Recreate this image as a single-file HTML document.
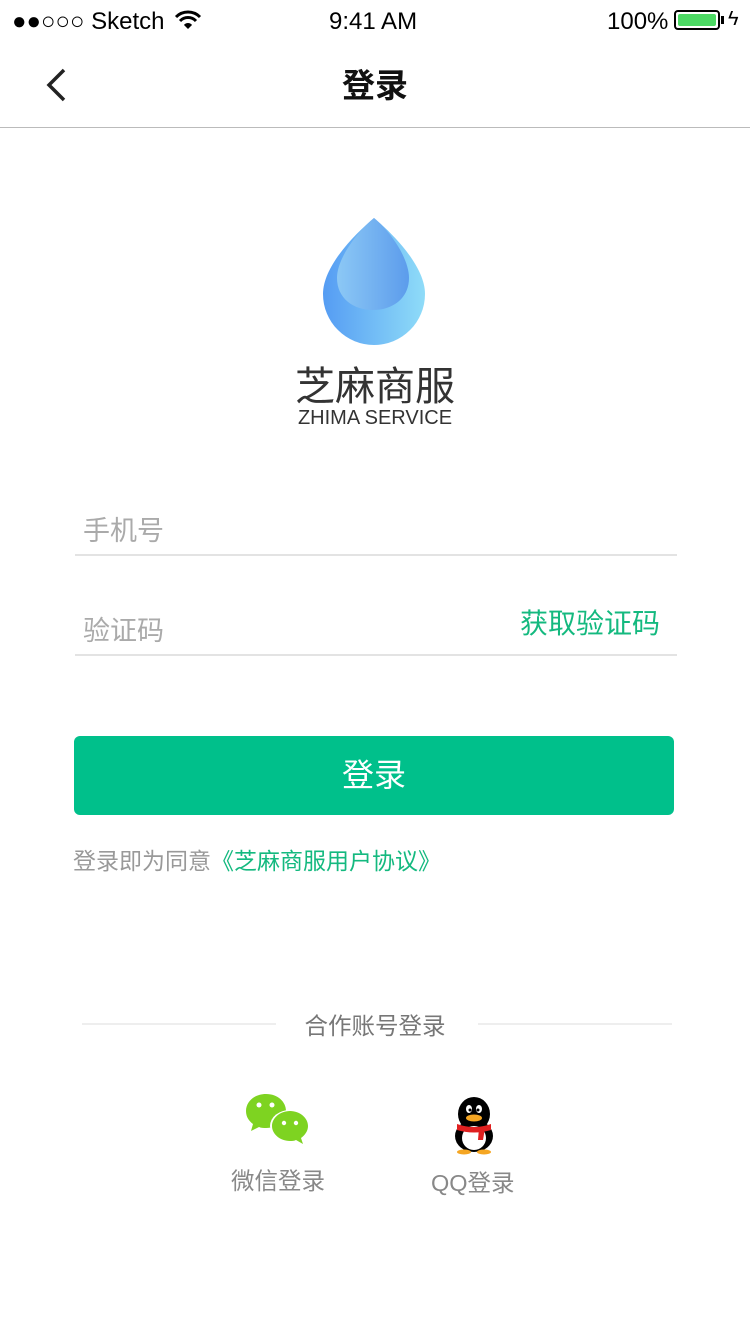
<!DOCTYPE html>
<html><head><meta charset="utf-8">
<style>
*{margin:0;padding:0;box-sizing:border-box}
body{width:750px;height:1334px;background:#fff;font-family:"Liberation Sans","Noto Sans CJK SC",sans-serif;position:relative;overflow:hidden}
.a{position:absolute;white-space:nowrap}
</style></head><body>
<div class="a" style="left:12px;top:8px;font-size:24px;color:#000">●●○○○ Sketch</div>
<svg class="a" style="left:174px;top:10px" width="28" height="20" viewBox="0 0 28 20"><path d="M2 7a17 17 0 0 1 24 0" stroke="#000" stroke-width="3" fill="none"/><path d="M6 11a11 11 0 0 1 16 0" stroke="#000" stroke-width="3" fill="none"/><path d="M10 15a5 5 0 0 1 8 0L14 19z" fill="#000"/></svg>
<div class="a" style="left:329px;top:8px;font-size:24px">9:41 AM</div>
<div class="a" style="left:607px;top:8px;font-size:24px">100%</div>
<div class="a" style="left:674px;top:10px;width:46px;height:20px;border:2px solid #000;border-radius:4px;padding:2px"><div style="width:100%;height:100%;background:#4cd964;border-radius:2px"></div></div>
<div class="a" style="left:721px;top:16px;width:3px;height:8px;background:#000"></div>
<div class="a" style="left:728px;top:8px;font-size:20px">ϟ</div>
<svg class="a" style="left:44px;top:68px" width="24" height="34"><path d="M20 2L5 17l15 15" stroke="#222" stroke-width="3.5" fill="none"/></svg>
<div class="a" style="left:0;width:750px;text-align:center;top:66px;font-size:33px;line-height:40px;font-weight:bold;color:#111">登录</div>
<div class="a" style="left:0;top:127px;width:750px;height:1px;background:#bbb"></div>
<svg class="a" style="left:320px;top:216px" width="108" height="130" viewBox="0 0 108 130">
<defs><linearGradient id="g" x1="0" x2="1"><stop offset="0" stop-color="#559cf3"/><stop offset="1" stop-color="#8fdcf8"/></linearGradient>
<linearGradient id="h" x1="0" x2="1"><stop offset="0" stop-color="#8cc8f5"/><stop offset="1" stop-color="#5c9cec"/></linearGradient></defs>
<path d="M54 2C35 18 3 50 3 78a51 51 0 0 0 102 0C105 50 73 18 54 2z" fill="url(#g)"/>
<path d="M54 2C38 15 17 42 17 62c0 20 16 32 36 32s36-12 36-32C89 42 70 15 54 2z" fill="url(#h)"/>
</svg>
<div class="a" style="left:0;width:750px;text-align:center;top:364px;font-size:40px;line-height:46px;color:#333">芝麻商服</div>
<div class="a" style="left:0;width:750px;text-align:center;top:406px;font-size:20px;line-height:24px;color:#333">ZHIMA SERVICE</div>
<div class="a" style="left:83px;top:511px;font-size:27px;line-height:40px;color:#aaa">手机号</div>
<div class="a" style="left:75px;top:554px;width:602px;height:2px;background:#e3e3e3"></div>
<div class="a" style="left:83px;top:611px;font-size:27px;line-height:40px;color:#aaa">验证码</div>
<div class="a" style="left:520px;top:604px;font-size:28px;line-height:40px;color:#14b97f">获取验证码</div>
<div class="a" style="left:75px;top:654px;width:602px;height:2px;background:#e3e3e3"></div>
<div class="a" style="left:74px;top:736px;width:600px;height:79px;background:#00c08b;border-radius:6px;color:#fff;font-size:32px;text-align:center;line-height:79px">登录</div>
<div class="a" style="left:73px;top:844px;font-size:23px;line-height:34px;color:#999">登录即为同意<span style="color:#14b97f">《芝麻商服用户协议》</span></div>
<div class="a" style="left:82px;top:1023px;width:194px;height:2px;background:#eee"></div>
<div class="a" style="left:478px;top:1023px;width:194px;height:2px;background:#eee"></div>
<div class="a" style="left:0;width:750px;text-align:center;top:1009px;font-size:23.5px;line-height:34px;color:#777">合作账号登录</div>
<svg class="a" style="left:244px;top:1092px" width="68" height="54" viewBox="0 0 68 54">
<path d="M22 2C10 2 2 10 2 19c0 6 3 10 7 13l-2 7 8-4c2 1 5 1 7 1 12 0 20-8 20-17S34 2 22 2z" fill="#7ed321"/>
<ellipse cx="46" cy="34" rx="20" ry="16" fill="#fff"/>
<path d="M46 19c-10 0-18 7-18 15s8 15 18 15c2 0 4 0 6-1l7 4-2-6c4-3 7-7 7-12 0-8-8-15-18-15z" fill="#7ed321"/>
<circle cx="15" cy="13" r="2.5" fill="#fff"/><circle cx="28" cy="13" r="2.5" fill="#fff"/>
<circle cx="40" cy="31" r="2.2" fill="#fff"/><circle cx="52" cy="31" r="2.2" fill="#fff"/></svg>
<svg class="a" style="left:449px;top:1096px" width="50" height="60" viewBox="0 0 50 60">
<ellipse cx="25" cy="40" rx="19" ry="16" fill="#000"/><ellipse cx="25" cy="18" rx="16" ry="17" fill="#000"/>
<ellipse cx="25" cy="42" rx="12" ry="12" fill="#fff"/>
<ellipse cx="20" cy="13" rx="3" ry="4" fill="#fff"/><ellipse cx="30" cy="13" rx="3" ry="4" fill="#fff"/>
<circle cx="21" cy="14" r="1.5" fill="#000"/><circle cx="29" cy="14" r="1.5" fill="#000"/>
<ellipse cx="25" cy="22" rx="8" ry="3.5" fill="#f5a623"/>
<path d="M8 28q17 6 34 0v6q-17 5-34 0z" fill="#e02020"/><path d="M30 32h6l-2 12h-5z" fill="#e02020"/>
<ellipse cx="15" cy="56" rx="7" ry="2.5" fill="#f5a623"/><ellipse cx="35" cy="56" rx="7" ry="2.5" fill="#f5a623"/></svg>
<div class="a" style="left:231px;top:1164px;font-size:23.5px;line-height:34px;color:#888">微信登录</div>
<div class="a" style="left:431px;top:1166px;font-size:23.5px;line-height:34px;color:#888">QQ登录</div>
</body></html>
